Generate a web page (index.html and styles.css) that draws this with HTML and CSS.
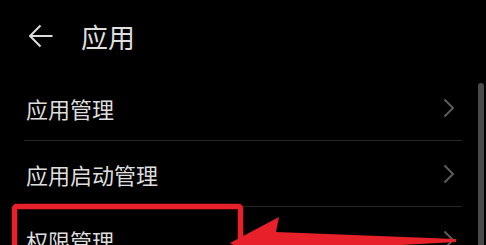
FILE: index.html
```html
<!DOCTYPE html>
<html>
<head>
  <meta charset="UTF-8">
  <title>应用</title>
  <link rel="stylesheet" href="styles.css">
</head>
<body>
  <div class="screen">
    <header class="appbar">
      <svg class="back-icon" width="26" height="24" viewBox="0 0 26 24">
        <path d="M24.5 12 H2 M12.5 1.5 L2 12 L12.5 22.5" fill="none" stroke="#dcdcdc" stroke-width="2"/>
      </svg>
      <h1 class="appbar-title">应用</h1>
    </header>

    <ul class="list">
      <li class="list-item">
        <span class="item-label">应用管理</span>
        <svg class="chevron" width="12" height="20" viewBox="0 0 12 20">
          <path d="M1.5 1.5 L10 10 L1.5 18.5" fill="none" stroke="#5c5c5c" stroke-width="2"/>
        </svg>
      </li>
      <li class="list-item">
        <span class="item-label">应用启动管理</span>
        <svg class="chevron" width="12" height="20" viewBox="0 0 12 20">
          <path d="M1.5 1.5 L10 10 L1.5 18.5" fill="none" stroke="#5c5c5c" stroke-width="2"/>
        </svg>
      </li>
      <li class="list-item">
        <span class="item-label">权限管理</span>
        <svg class="chevron" width="12" height="20" viewBox="0 0 12 20">
          <path d="M1.5 1.5 L10 10 L1.5 18.5" fill="none" stroke="#5c5c5c" stroke-width="2"/>
        </svg>
      </li>
    </ul>

    <div class="scrollbar"></div>

    <!-- red markup drawn over the screenshot -->
    <svg class="annotation" width="486" height="245" viewBox="0 0 486 245">
      <rect x="14.5" y="206.5" width="226" height="70" rx="2" fill="none" stroke="#e8202a" stroke-width="5.5"/>
      <polygon points="456,239 276,232 279,217 230,243 268,266 274,252 456,242" fill="#e8202a"/>
    </svg>
  </div>
</body>
</html>
```

FILE: styles.css
```css
* {
  margin: 0;
  padding: 0;
  box-sizing: border-box;
}

:root {
  --bg-color: #000000;
  --text-color: #dedede;
  --divider-color: #272727;
}

body {
  background-color: var(--bg-color);
  color: var(--text-color);
  font-family: "Noto Sans CJK SC", "Noto Sans", sans-serif;
  overflow: hidden;
}

.screen {
  position: relative;
  width: 486px;
  height: 245px;
  overflow: hidden;
}

/* App bar */
.appbar {
  display: flex;
  align-items: center;
  height: 75px;
  padding-left: 28px;
  padding-bottom: 3px;
}

.back-icon {
  display: block;
  margin-right: 27px;
}

.appbar-title {
  font-size: 27px;
  font-weight: 400;
  line-height: 1;
}

/* List */
.list {
  list-style: none;
  padding: 0 24px;
}

.list-item {
  display: flex;
  align-items: center;
  justify-content: space-between;
  height: 66px;
  padding-left: 2px;
  padding-right: 7px;
  border-bottom: 1px solid var(--divider-color);
}

.item-label {
  font-size: 22px;
  line-height: 1;
}

.chevron {
  display: block;
}

/* Scrollbar */
.scrollbar {
  position: absolute;
  left: 478px;
  top: 83px;
  width: 6px;
  height: 200px;
  border-radius: 3px;
  background-color: #4a4a4a;
}

.annotation {
  position: absolute;
  left: 0;
  top: 0;
}
```
